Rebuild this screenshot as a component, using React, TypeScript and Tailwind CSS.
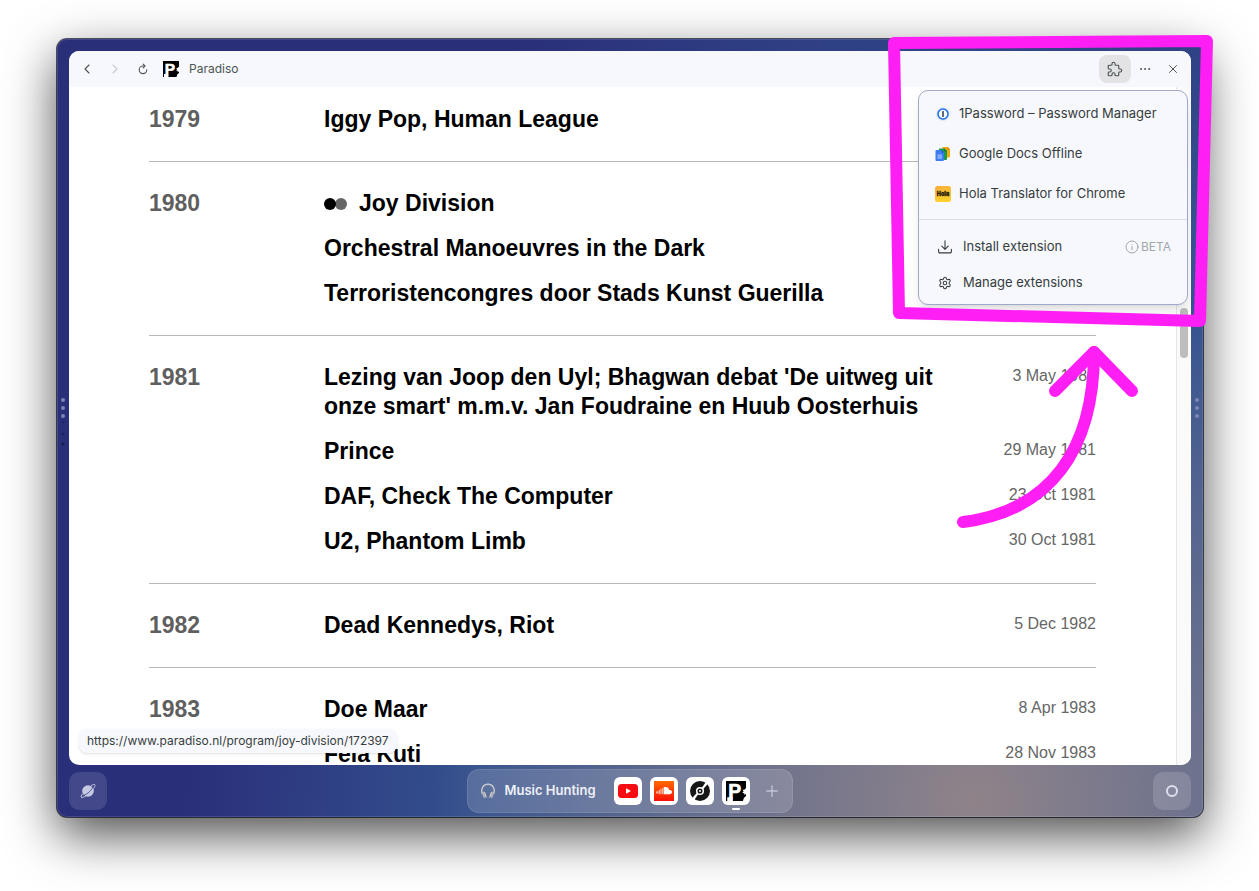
import { ChevronLeft, ChevronRight, Ellipsis, Plus, Settings, X } from "lucide-react";

type Show = { title: string; date?: string; featured?: boolean };
type Year = { year: string; shows: Show[] };

const programme: Year[] = [
  { year: "1979", shows: [{ title: "Iggy Pop, Human League" }] },
  {
    year: "1980",
    shows: [
      { title: "Joy Division", featured: true },
      { title: "Orchestral Manoeuvres in the Dark" },
      { title: "Terroristencongres door Stads Kunst Guerilla" },
    ],
  },
  {
    year: "1981",
    shows: [
      {
        title:
          "Lezing van Joop den Uyl; Bhagwan debat 'De uitweg uit onze smart' m.m.v. Jan Foudraine en Huub Oosterhuis",
        date: "3 May 1981",
      },
      { title: "Prince", date: "29 May 1981" },
      { title: "DAF, Check The Computer", date: "23 Oct 1981" },
      { title: "U2, Phantom Limb", date: "30 Oct 1981" },
    ],
  },
  { year: "1982", shows: [{ title: "Dead Kennedys, Riot", date: "5 Dec 1982" }] },
  {
    year: "1983",
    shows: [
      { title: "Doe Maar", date: "8 Apr 1983" },
      { title: "Fela Kuti", date: "28 Nov 1983" },
    ],
  },
];

function ParadisoLogo({ className }: { className: string }) {
  return (
    <svg viewBox="0 0 16 16" className={className} aria-hidden="true">
      <rect width="16" height="16" fill="#000" />
      <text x="1.800" y="13.400" fontFamily="Liberation Sans, sans-serif" fontWeight="700" fontSize="15.500" fill="#fff" stroke="#fff" strokeWidth="0.500">
        P
      </text>
      <path d="M1 13h4.500v3H1z" fill="#fff" />
      <path d="M16 5.600l-1.300 1.300-1.500.1.900 1.200-1 1.300 1.500.2.200 1.500L16 10.200zM16 12l-1.600 1.300-.9 2.700H16z" fill="#fff" />
    </svg>
  );
}

function PuzzleIcon() {
  return (
    <svg viewBox="0 0 24 24" className="size-[18px]" fill="none" stroke="currentColor" strokeWidth="1.5" strokeLinecap="round" strokeLinejoin="round" aria-hidden="true">
      <path d="M4 7h3a1 1 0 0 0 1-1V5a2 2 0 0 1 4 0v1a1 1 0 0 0 1 1h3a1 1 0 0 1 1 1v3a1 1 0 0 0 1 1h1a2 2 0 0 1 0 4h-1a1 1 0 0 0-1 1v3a1 1 0 0 1-1 1h-3a1 1 0 0 1-1-1v-1a2 2 0 0 0-4 0v1a1 1 0 0 1-1 1H4a1 1 0 0 1-1-1v-3a1 1 0 0 1 1-1h1a2 2 0 0 0 0-4H4a1 1 0 0 1-1-1V8a1 1 0 0 1 1-1" />
    </svg>
  );
}

function ReloadIcon() {
  return (
    <svg viewBox="0 0 12 12" className="size-3" fill="none" stroke="currentColor" strokeWidth="1.100" strokeLinecap="round" strokeLinejoin="round" aria-hidden="true">
      <path d="M7.500 3H6a3.800 3.800 0 1 0 3.800 3.800" />
      <path d="M6.200 1.200L8 3 6.200 4.800" />
    </svg>
  );
}

function OnePasswordIcon() {
  return (
    <svg viewBox="0 0 16 16" className="size-4" aria-hidden="true">
      <circle cx="8" cy="8" r="7" fill="#e3e6ec" />
      <circle cx="8" cy="8" r="5" fill="#fff" stroke="#1a6fe8" strokeWidth="1.500" />
      <rect x="7.100" y="5" width="1.800" height="6" rx="0.600" fill="#4c5866" />
    </svg>
  );
}

function DocsIcon() {
  return (
    <svg viewBox="0 0 16 16" className="size-4" aria-hidden="true">
      <path d="M7.500 1h5.200L15 3.300V10.500a1 1 0 0 1-1 1H7.500z" fill="#f5a80c" />
      <path d="M12.500 1L15 3.500h-2.500z" fill="#c97a00" />
      <path d="M4 2.500h5.500L12 5v8a1 1 0 0 1-1 1H4z" fill="#169c50" />
      <path d="M9.300 2.500L12 5.200H9.300z" fill="#0b6b36" />
      <path d="M1.500 4h5L9 6.500V14a1 1 0 0 1-1 1H1.500a1 1 0 0 1-1-1V5a1 1 0 0 1 1-1z" fill="#3b7cf0" />
      <path d="M6.500 4L9 6.500H6.500z" fill="#1d4fc0" />
      <rect x="2.500" y="8.500" width="4.500" height="4.200" fill="#9cbdf8" />
      <path d="M2.500 9.900H7M2.500 11.300H7" stroke="#3b7cf0" strokeWidth="0.400" />
    </svg>
  );
}

function HolaIcon() {
  return (
    <svg viewBox="0 0 16 16" className="size-4" aria-hidden="true">
      <defs>
        <linearGradient id="hola" x1="0" y1="0" x2="0.3" y2="1">
          <stop offset="0" stopColor="#fbae3c" />
          <stop offset="1" stopColor="#fdd02c" />
        </linearGradient>
      </defs>
      <rect width="16" height="16" rx="2.500" fill="url(#hola)" />
      <text x="8" y="10" textAnchor="middle" fontFamily="Inter, sans-serif" fontWeight="900" fontSize="5.500" fill="#2b1d06" stroke="#2b1d06" strokeWidth="0.3">
        Hola
      </text>
    </svg>
  );
}

function InstallIcon() {
  return (
    <svg viewBox="0 0 16 16" className="size-4" fill="none" stroke="currentColor" strokeWidth="1.100" strokeLinecap="round" strokeLinejoin="round" aria-hidden="true">
      <path d="M8 1.800v8.400M4.800 7.200L8 10.300l3.200-3.100M1.600 10.300v2.200a1.400 1.400 0 0 0 1.400 1.400h10a1.400 1.400 0 0 0 1.400-1.400v-2.200" />
    </svg>
  );
}

function InfoIcon() {
  return (
    <svg viewBox="0 0 14 14" className="size-3.5" fill="none" stroke="currentColor" strokeLinecap="round" aria-hidden="true">
      <circle cx="7" cy="7" r="6" />
      <path d="M7 6.500v3.300M7 4.300v.1" />
    </svg>
  );
}

function PlanetIcon() {
  return (
    <svg viewBox="0 0 16 16" className="size-4" fill="none" aria-hidden="true">
      <circle cx="8" cy="8" r="5.800" fill="#c6c9e2" />
      <path d="M3.200 12.600C7.600 11.200 11.600 7.600 13.200 3.600" stroke="#444a8c" strokeWidth="0.900" />
      <path d="M2.600 10.800C1.100 12.700.7 14 1.300 14.400c1.200.9 5.600-1.800 9-5.200 3.300-3.300 5.400-6.500 4.500-7.500-.5-.6-1.900-.2-3.500.8" stroke="#c6c9e2" strokeWidth="1" strokeLinecap="round" />
    </svg>
  );
}

function HeadphonesIcon() {
  return (
    <svg viewBox="0 0 16 16" className="size-4" fill="none" aria-hidden="true">
      <path d="M2.400 11C.2 5.500 3.500 1.200 8 1.200s7.800 4.300 5.600 9.800" stroke="#c9ccd3" strokeWidth="1.300" />
      <path d="M3.300 9.500C2 5.500 4.600 2.600 8 2.600s6 2.900 4.700 6.900" stroke="#777f96" strokeWidth="0.700" />
      <rect x="2.600" y="8.600" width="2.400" height="6.200" rx="1.200" fill="#aeb2ba" transform="rotate(-18 3.800 11.700)" />
      <rect x="11" y="8.600" width="2.400" height="6.200" rx="1.200" fill="#aeb2ba" transform="rotate(18 12.200 11.700)" />
      <path d="M4.700 9.300l1.500 4.900M11.300 9.300l-1.500 4.900" stroke="#e9dcc3" strokeWidth="0.900" strokeLinecap="round" />
    </svg>
  );
}

function YouTubeIcon() {
  return (
    <svg viewBox="0 0 20 20" className="size-5" aria-hidden="true">
      <rect x="0" y="3" width="20" height="14" rx="3.500" fill="#f70c12" />
      <path d="M8 7.200v5.600l5-2.800z" fill="#fff" />
    </svg>
  );
}

function SoundCloudIcon() {
  return (
    <svg viewBox="0 0 20 20" className="size-5" aria-hidden="true">
      <defs>
        <linearGradient id="cloud" x1="0" y1="0" x2="0" y2="1">
          <stop offset="0" stopColor="#ff6a00" />
          <stop offset="1" stopColor="#f90f0a" />
        </linearGradient>
      </defs>
      <rect width="20" height="20" fill="url(#cloud)" />
      <path d="M9.600 6.600c2.600-1.300 5.200.2 5.700 2.500 1.500-.3 2.700.7 2.700 2s-1 2.100-2.200 2.100H9.600z" fill="#fff" />
      <path d="M8.400 7.200v6M6.900 7.800v5.400M5.400 8.800v4.400M3.900 9.800v3.200M2.500 10.500v1.800" stroke="#ffd9c8" strokeWidth="0.900" />
    </svg>
  );
}

function DiscIcon() {
  return (
    <svg viewBox="0 0 20 20" className="size-5" aria-hidden="true">
      <circle cx="10" cy="10" r="10" fill="#161616" />
      <path d="M11.500 7.200L16.200.6l2 1.800-5.400 6.200zM8.500 12.800L3.800 19.400l-2-1.800 5.400-6.200z" fill="#fff" />
      <circle cx="10" cy="10" r="3.300" fill="none" stroke="#fff" strokeWidth="1.500" />
      <circle cx="10" cy="10" r="1" fill="#fff" />
    </svg>
  );
}

function Toolbar() {
  return (
    <header className="flex h-9 shrink-0 items-center bg-[#f7f8fd] pr-1 pl-2.5 text-[#4c5453]">
      <nav className="flex items-center gap-3" aria-label="Page navigation">
        <button className="grid h-6 w-4 place-items-center" aria-label="Back">
          <ChevronLeft className="size-4" strokeWidth={1.6} />
        </button>
        <button className="grid h-6 w-4 place-items-center text-[#c6c8cd]" aria-label="Forward">
          <ChevronRight className="size-4" strokeWidth={1.6} />
        </button>
        <button className="grid h-6 w-4 place-items-center" aria-label="Reload">
          <ReloadIcon />
        </button>
      </nav>
      <ParadisoLogo className="ml-3 size-4" />
      <span className="ml-2.5 text-xs">Paradiso</span>
      <div className="ml-auto flex items-center">
        <button className="grid h-7 w-8 place-items-center rounded-lg bg-[#e3e3e5]" aria-label="Extensions" aria-expanded="true">
          <PuzzleIcon />
        </button>
        <button className="grid size-7 place-items-center" aria-label="More">
          <Ellipsis className="size-3.5" strokeWidth={1.6} />
        </button>
        <button className="grid size-7 place-items-center" aria-label="Close">
          <X className="size-3.5" strokeWidth={1.7} />
        </button>
      </div>
    </header>
  );
}

function ExtensionsMenu() {
  const extensions = [
    { name: "1Password – Password Manager", icon: <OnePasswordIcon /> },
    { name: "Google Docs Offline", icon: <DocsIcon /> },
    { name: "Hola Translator for Chrome", icon: <HolaIcon /> },
  ];
  return (
    <div className="absolute top-[39px] right-[3px] w-[270px] rounded-[10px] border border-[#9ea9cb] bg-[#f7f8fd] py-[3px] text-[13px] text-[#363d3c] shadow-lg">
      <ul>
        {extensions.map((extension) => (
          <li key={extension.name}>
            <button className="flex h-10 w-full items-center gap-2 px-4 text-left">
              {extension.icon}
              {extension.name}
            </button>
          </li>
        ))}
      </ul>
      <div className="mt-[5px] mb-[9px] border-t border-[#dcdee5]" />
      <button className="flex h-9 w-full items-center gap-2.5 pr-4 pl-[18px] text-left">
        <InstallIcon />
        Install extension
        <span className="ml-auto flex items-center gap-0.5 text-xs text-[#a0a8a8]">
          <InfoIcon />
          BETA
        </span>
      </button>
      <button className="flex h-9 w-full items-center gap-2.5 pr-4 pl-[18px] text-left">
        <span className="grid size-4 place-items-center">
          <Settings className="size-3.5" strokeWidth={1.8} />
        </span>
        Manage extensions
      </button>
    </div>
  );
}

function Programme() {
  return (
    <main className="min-w-0 flex-1 overflow-hidden px-20 font-['Liberation_Sans',Arial,sans-serif]">
      {programme.map(({ year, shows }) => (
        <section key={year} className="flex border-b border-[#b9b9b9] py-[27px] first:pt-[18px] last:border-0">
          <h2 className="w-[175px] shrink-0 text-[23px] leading-[29px] font-bold text-[#5f5f5f]">{year}</h2>
          <ul className="flex flex-1 flex-col gap-4">
            {shows.map((show) => (
              <li key={show.title} className="flex items-start justify-between gap-6">
                <a href="#programme" className="flex max-w-[620px] items-center gap-3 text-[23px] leading-[29px] font-bold text-black">
                  {show.featured && (
                    <svg viewBox="0 0 23 12" className="h-3 w-[23px]" aria-hidden="true">
                      <circle cx="17" cy="6" r="6" fill="#666" />
                      <circle cx="6" cy="6" r="6" fill="#000" />
                    </svg>
                  )}
                  {show.title}
                </a>
                {show.date && <time className="shrink-0 text-base leading-[26px] text-[#666]">{show.date}</time>}
              </li>
            ))}
          </ul>
        </section>
      ))}
    </main>
  );
}

function Handle({ trailing }: { trailing?: boolean }) {
  return (
    <div className="flex w-3 shrink-0 items-center justify-center">
      <svg viewBox="0 0 6 76" className="h-[76px] w-1.5" aria-hidden="true">
        <g fill="#7c86b4">
          <circle cx="3" cy="30" r="2" />
          <circle cx="3" cy="38" r="2" />
          <circle cx="3" cy="46" r="2" />
        </g>
        {!trailing && (
          <g fill="#171b52">
            <circle cx="3" cy="52" r="1.500" opacity="0.5" />
            <circle cx="3" cy="64" r="1.500" opacity="0.6" />
            <circle cx="3" cy="74" r="1.500" />
          </g>
        )}
      </svg>
    </div>
  );
}

function Dock() {
  const tile = "grid size-7 place-items-center rounded-md bg-white";
  return (
    <footer className="flex h-[52px] shrink-0 items-center justify-between px-3">
      <button className="grid size-[38px] place-items-center rounded-[10px] bg-white/12" aria-label="Spaces">
        <PlanetIcon />
      </button>
      <div className="flex h-11 items-center gap-2 rounded-xl border border-white/10 bg-white/15 pr-1.5 pl-3">
        <HeadphonesIcon />
        <span className="mr-2.5 text-[13px] font-semibold text-[#eef0f8]">Music Hunting</span>
        <button className={tile} aria-label="YouTube">
          <YouTubeIcon />
        </button>
        <button className={tile} aria-label="SoundCloud">
          <SoundCloudIcon />
        </button>
        <button className={tile} aria-label="Records">
          <DiscIcon />
        </button>
        <button className="relative grid size-7 place-items-center rounded-md bg-white" aria-label="Paradiso">
          <ParadisoLogo className="size-5" />
          <span className="absolute -bottom-[5px] left-1/2 h-0.5 w-2 -translate-x-1/2 rounded-full bg-white" />
        </button>
        <button className="grid size-7 place-items-center text-[#c1c5d8]" aria-label="New tab">
          <Plus className="size-[18px]" strokeWidth={1.8} />
        </button>
      </div>
      <button className="grid size-[38px] place-items-center rounded-[10px] bg-white/15" aria-label="Assistant">
        <span className="size-3 rounded-full border-2 border-[#dcdfeb]" />
      </button>
    </footer>
  );
}

function Annotations() {
  return (
    <svg
      width="1259"
      height="891"
      viewBox="0 0 1259 891"
      className="pointer-events-none absolute top-0 right-0"
      fill="none"
      stroke="#ff1ff4"
      strokeWidth="12"
      strokeLinecap="round"
      strokeLinejoin="round"
      aria-hidden="true"
    >
      <path d="M894 43L1207 41L1200 321L899 313Z" />
      <path d="M963 522C1050 511 1094 450 1094 352" />
      <path d="M1055 391L1094 352L1132 391" />
    </svg>
  );
}

export default function App() {
  return (
    <div className="relative flex h-screen flex-col overflow-hidden bg-white pt-[39px] pr-14 pb-[74px] pl-[57px] font-['Inter',sans-serif]">
      <div className="flex min-h-0 flex-1 flex-col rounded-[10px] bg-[#2a2f7a] bg-[radial-gradient(circle_540px_at_80%_98%,#8f8389_0%,#8f8389a0_40%,#8f838900_100%),radial-gradient(ellipse_850px_1050px_at_85%_108%,#3a5a98_0%,#34528f_65%,#2a2f7a_100%)] pt-3 shadow-[0_18px_50px_rgba(0,0,0,0.7),0_0_0_1px_#55586a,inset_0_0_0_1px_rgba(255,255,255,0.12)]">
        <div className="flex min-h-0 flex-1">
          <Handle />
          <div className="relative flex min-w-0 flex-1 flex-col overflow-hidden rounded-[10px] bg-white">
            <Toolbar />
            <div className="flex min-h-0 flex-1">
              <Programme />
              <div className="w-[15px] shrink-0 border-l border-[#e6e6e6] bg-[#fafafa] px-[3px] pt-[221px]">
                <div className="h-[50px] w-2 rounded-full bg-[#bdbdbd]" />
              </div>
            </div>
            <div className="absolute bottom-3 left-2.5 rounded-lg bg-[#f7f8fd] px-2 py-1 text-xs text-[#363d3c] shadow-sm">
              https://www.paradiso.nl/program/joy-division/172397
            </div>
            <ExtensionsMenu />
          </div>
          <Handle trailing />
        </div>
        <Dock />
      </div>
      <Annotations />
    </div>
  );
}
